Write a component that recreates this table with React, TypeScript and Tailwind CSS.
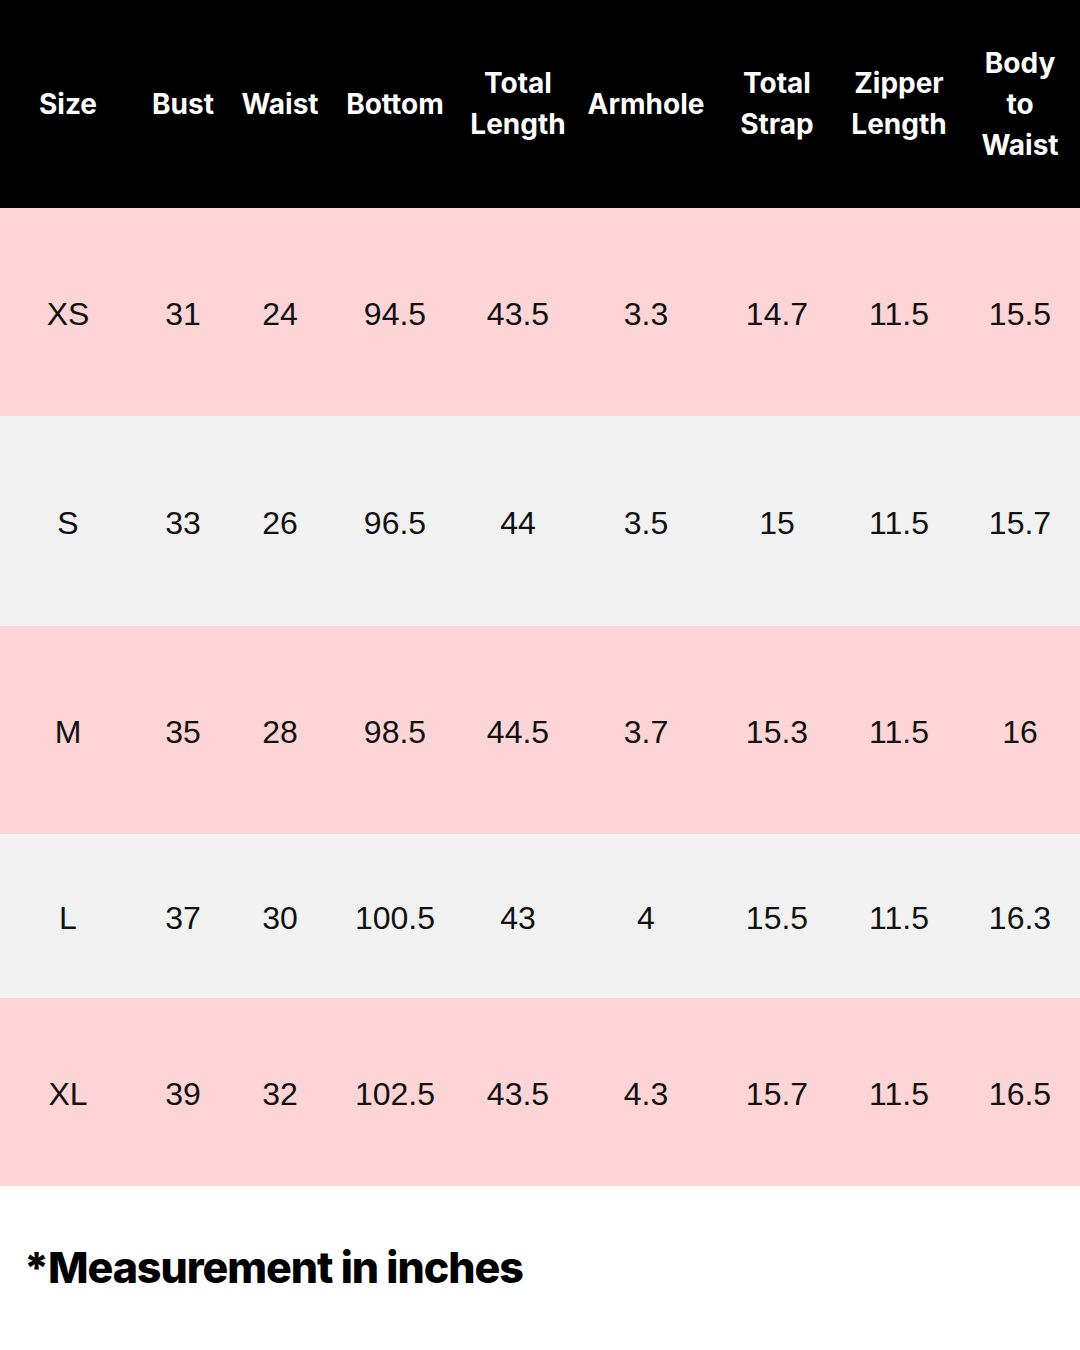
const COLS = [
  { label: ["Size"], w: "w-[136px]" },
  { label: ["Bust"], w: "w-[94px]" },
  { label: ["Waist"], w: "w-[100px]" },
  { label: ["Bottom"], w: "w-[130px]" },
  { label: ["Total", "Length"], w: "w-[116px]" },
  { label: ["Armhole"], w: "w-[140px]" },
  { label: ["Total", "Strap"], w: "w-[122px]" },
  { label: ["Zipper", "Length"], w: "w-[122px]" },
  { label: ["Body", "to", "Waist"], w: "w-[120px]" },
];

const ROWS = [
  { h: "h-[208px]", bg: "bg-[#fdd5d7]", cells: ["XS", "31", "24", "94.5", "43.5", "3.3", "14.7", "11.5", "15.5"] },
  { h: "h-[210px]", bg: "bg-[#f1f1f1]", cells: ["S", "33", "26", "96.5", "44", "3.5", "15", "11.5", "15.7"] },
  { h: "h-[208px]", bg: "bg-[#fdd5d7]", cells: ["M", "35", "28", "98.5", "44.5", "3.7", "15.3", "11.5", "16"] },
  { h: "h-[164px]", bg: "bg-[#f1f1f1]", cells: ["L", "37", "30", "100.5", "43", "4", "15.5", "11.5", "16.3"] },
  { h: "h-[188px]", bg: "bg-[#fdd5d7]", cells: ["XL", "39", "32", "102.5", "43.5", "4.3", "15.7", "11.5", "16.5"] },
];

export default function App() {
  return (
    <div className="w-[1080px] h-[1350px] bg-white flex flex-col">
      <div className="h-[208px] bg-black flex">
        {COLS.map((c) => (
          <div
            key={c.label.join(" ")}
            className={`${c.w} flex flex-col items-center justify-center text-white font-['Inter',sans-serif] font-bold text-[28px] leading-[41px] text-center`}
          >
            {c.label.map((l) => (
              <span key={l}>{l}</span>
            ))}
          </div>
        ))}
      </div>
      {ROWS.map((r) => (
        <div key={r.cells[0]} className={`${r.h} ${r.bg} flex`}>
          {r.cells.map((v, i) => (
            <div
              key={i}
              className={`${COLS[i].w} flex items-center justify-center pt-[3px] font-['Liberation_Sans',Arial,sans-serif] text-[32px] text-[#111]`}
            >
              {v}
            </div>
          ))}
        </div>
      ))}
      <div className="flex-1 flex items-center pl-[24px] pb-[2px]">
        <span className="font-['Inter',sans-serif] font-extrabold text-[43px] tracking-[-0.025em] text-black">
          *Measurement in inches
        </span>
      </div>
    </div>
  );
}
